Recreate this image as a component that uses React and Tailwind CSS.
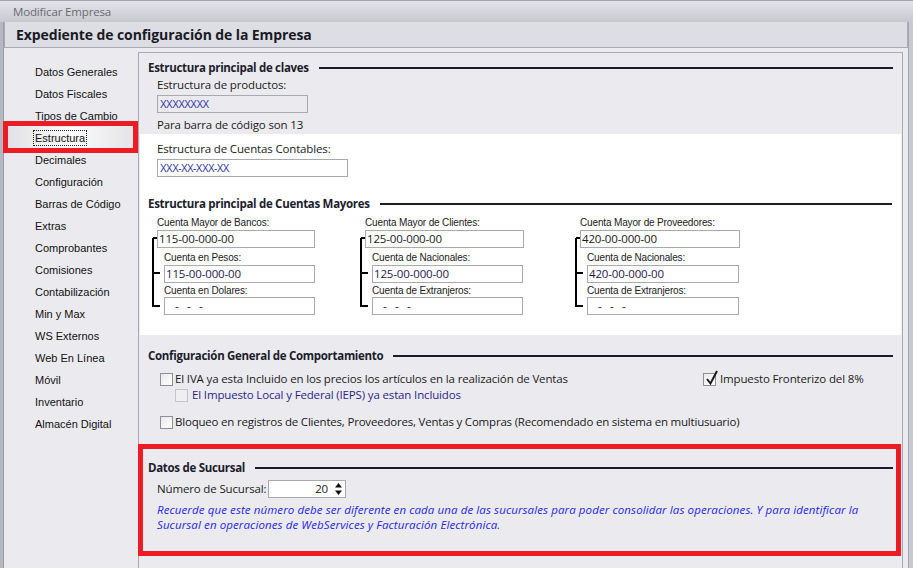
import React from "react";

const SIDE = [
  "Datos Generales",
  "Datos Fiscales",
  "Tipos de Cambio",
  "Estructura",
  "Decimales",
  "Configuración",
  "Barras de Código",
  "Extras",
  "Comprobantes",
  "Comisiones",
  "Contabilización",
  "Min y Max",
  "WS Externos",
  "Web En Línea",
  "Móvil",
  "Inventario",
  "Almacén Digital",
];

const TXT = "text-[11.5px] tracking-[-0.15px]";

function SectionTitle({ children, className = "" }) {
  return (
    <div className={"h-[16px] flex items-center pl-[9px] pr-[9px] " + className}>
      <span className="text-[11.5px] tracking-[-0.3px] font-bold text-[#1c1c2c] whitespace-nowrap">{children}</span>
      <div className="flex-1 h-[2px] bg-[#1c1c30] ml-[10px]" />
    </div>
  );
}

function Bracket() {
  return (
    <svg className="absolute left-[-5px] top-0" width="12" height="90" viewBox="0 0 12 90">
      <path d="M1 8 H5 M1 8 V77 M1 43 H8 M1 76 H8" stroke="#000" strokeWidth="2" fill="none" />
    </svg>
  );
}

function CuentaCol({ title, sub1, sub2, value, width, subWidth }) {
  const small = "h-[12px] flex items-center text-[10px] font-['Liberation_Sans',Arial,sans-serif] text-[#1a1a1a] whitespace-nowrap";
  const inp = "h-[18px] border border-[#a9a9b0] bg-white flex items-center pl-[1px] " + TXT + " text-[#1a1a1a]";
  return (
    <div className="flex flex-col">
      <div className={small}>{title}</div>
      <div className="relative mt-[2px]">
        <Bracket />
        <div className={inp} style={{ width }}>{value}</div>
        <div className="ml-[7px]">
          <div className={small + " mt-[3px]"}>{sub1}</div>
          <div className={inp + " mt-[2px] text-[#2a1850]"} style={{ width: subWidth }}>{value}</div>
          <div className={small + " mt-[1px]"}>{sub2}</div>
          <div className={inp + " mt-[1px] whitespace-pre pl-[10px]"} style={{ width: subWidth }}>{"-   -   -"}</div>
        </div>
      </div>
    </div>
  );
}

function Check({ checked = false, disabled = false }) {
  return (
    <div
      className={
        "relative w-[13px] h-[13px] border shrink-0 " +
        (disabled ? "border-[#c4c4cc] bg-[#efeff2]" : "border-[#8e8f99] bg-gradient-to-br from-[#e9e9ec] to-[#ffffff]")
      }
    >
      {checked && (
        <svg className="absolute left-[1px] top-[-4px]" width="14" height="16" viewBox="0 0 14 16">
          <path d="M2 9 L5.5 13.5 L12 1" stroke="#1c1c1c" strokeWidth="2" fill="none" strokeLinejoin="miter" />
        </svg>
      )}
    </div>
  );
}

export default function App() {
  return (
    <div className={"w-[913px] h-[568px] overflow-hidden bg-[#ebebef] flex flex-col relative font-['Open_Sans',sans-serif] text-[#1b1b1b] " + TXT}>
      {/* Title bar */}
      <div className="h-[22px] shrink-0 flex items-center pl-[13px] border-t border-[#a3a4ae] bg-gradient-to-b from-[#e3e4e9] to-[#c8c9cf] text-[#6a6a74]">
        Modificar Empresa
      </div>

      <div className="flex-1 flex min-h-0">
        {/* left frame */}
        <div className="w-[4px] shrink-0 bg-[#b6b7c0] border-r border-[#9c9da7]" />

        <div className="w-[904px] shrink-0 flex flex-col">
          {/* Header */}
          <div className="h-[26px] shrink-0 border border-t-0 border-[#a9aab4] bg-[#dddee3] flex items-center pl-[11px]">
            <span className="text-[14px] tracking-[-0.1px] font-bold text-[#1a1a26]">Expediente de configuración de la Empresa</span>
          </div>

          <div className="flex-1 flex min-h-0">
            {/* Sidebar */}
            <div className="w-[134px] shrink-0 pt-[13px] flex flex-col font-['Liberation_Sans',Arial,sans-serif] text-[11px] tracking-normal text-[#111]">
              {SIDE.map((s) =>
                s === "Estructura" ? (
                  <div key={s} className="h-[22px] flex items-center pl-[25px] mx-[4px] bg-gradient-to-r from-[#e2e2e6] via-[#fbfbfc] to-[#e4e4e8]">
                    <span className="border border-dotted border-[#222] px-[1px] leading-[14px]">{s}</span>
                  </div>
                ) : (
                  <div key={s} className="h-[22px] flex items-center pl-[31px]">
                    {s}
                  </div>
                )
              )}
            </div>

            {/* Content */}
            <div className="w-[765px] shrink-0 mt-[4px] border-l border-t border-r border-[#a9aab4] flex flex-col">
              <div className="h-[7px]" />
              <SectionTitle>Estructura principal de claves</SectionTitle>
              <div className="h-[16px] mt-[1px] flex items-center pl-[18px]">Estructura de productos:</div>
              <div className="ml-[18px] mt-[2px] w-[151px] h-[18px] border border-[#a9a9b0] bg-[#ebebef] flex items-center pl-[2px] text-[10px] tracking-[-0.6px] text-[#3434a0] font-['Liberation_Sans',Arial,sans-serif]">
                XXXXXXXX
              </div>
              <div className="h-[16px] mt-[4px] flex items-center pl-[18px]">Para barra de código son 13</div>

              {/* white area */}
              <div className="mt-[1px] mx-[1px] bg-white flex flex-col pt-[7px] pb-[20px]">
                <div className="h-[16px] flex items-center pl-[17px]">Estructura de Cuentas Contables:</div>
                <div className="ml-[17px] mt-[2px] w-[191px] h-[18px] border border-[#a9a9b0] bg-white flex items-center pl-[2px] text-[10px] tracking-[-0.6px] text-[#3434a0] font-['Liberation_Sans',Arial,sans-serif]">
                  XXX-XX-XXX-XX
                </div>
                <SectionTitle className="mt-[19px] !pl-[8px]">Estructura principal de Cuentas Mayores</SectionTitle>
                <div className="mt-[4px] pl-[17px] flex">
                  <CuentaCol title="Cuenta Mayor de Bancos:" sub1="Cuenta en Pesos:" sub2="Cuenta en Dolares:" value="115-00-000-00" width={158} subWidth={151} />
                  <div className="ml-[50px]">
                    <CuentaCol title="Cuenta Mayor de Clientes:" sub1="Cuenta de Nacionales:" sub2="Cuenta de Extranjeros:" value="125-00-000-00" width={159} subWidth={151} />
                  </div>
                  <div className="ml-[56px]">
                    <CuentaCol title="Cuenta Mayor de Proveedores:" sub1="Cuenta de Nacionales:" sub2="Cuenta de Extranjeros:" value="420-00-000-00" width={160} subWidth={152} />
                  </div>
                </div>
              </div>

              <SectionTitle className="mt-[13px]">Configuración General de Comportamiento</SectionTitle>
              <div className="mt-[7px] h-[16px] flex items-center pl-[21px]">
                <div className="w-[543px] flex items-center">
                  <Check />
                  <span className="ml-[2px]">El IVA ya esta Incluido en los precios los artículos en la realización de Ventas</span>
                </div>
                <Check checked />
                <span className="ml-[4px]">Impuesto Fronterizo del 8%</span>
              </div>
              <div className="h-[16px] flex items-center pl-[36px]">
                <Check disabled />
                <span className="ml-[4px] text-[#2b1f86]">El Impuesto Local y Federal (IEPS) ya estan Incluidos</span>
              </div>
              <div className="mt-[11px] h-[16px] flex items-center pl-[21px]">
                <Check />
                <span className="ml-[2px] tracking-[-0.2px]">Bloqueo en registros de Clientes, Proveedores, Ventas y Compras (Recomendado en sistema en multiusuario)</span>
              </div>

              <SectionTitle className="mt-[30px]">Datos de Sucursal</SectionTitle>
              <div className="mt-[4px] h-[18px] flex items-center pl-[18px]">
                <span className="w-[111px]">Número de Sucursal:</span>
                <div className="w-[78px] h-[18px] border border-[#a9a9b0] bg-white flex items-center justify-end">
                  <span>20</span>
                  <svg className="ml-[6px] mr-[2px]" width="9" height="14" viewBox="0 0 9 14">
                    <path d="M4.5 1 L8 5.5 H1 Z M1 8.5 H8 L4.5 13 Z" fill="#111" />
                  </svg>
                </div>
              </div>
              <div className="mt-[4px] pl-[18px] italic leading-[15px] tracking-[0.1px] text-[#2626e8] whitespace-nowrap">
                Recuerde que este número debe ser diferente en cada una de las sucursales para poder consolidar las operaciones. Y para identificar la
                <br />
                Sucursal en operaciones de WebServices y Facturación Electrónica.
              </div>
            </div>
            <div className="flex-1" />
          </div>
        </div>

        {/* right frame */}
        <div className="flex-1 bg-[#c9cad1] border-l border-[#a5a6b0]" />
      </div>

      {/* Red annotation boxes */}
      <div className="absolute left-[3px] top-[121px] w-[135px] h-[32px] border-[5px] border-[#ed1c24]" />
      <div className="absolute left-[138px] top-[444px] w-[763px] h-[112px] border-[5px] border-[#ed1c24]" />
    </div>
  );
}
